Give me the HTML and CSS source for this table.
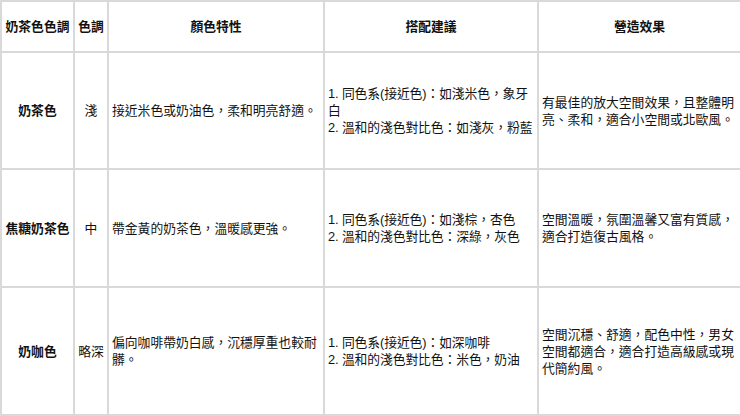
FILE: index.html
```html
<!DOCTYPE html>
<html lang="zh-Hant">
<head>
<meta charset="utf-8">
<link rel="stylesheet" href="styles.css">
</head>
<body>
<table class="tone-table">
  <colgroup>
    <col class="c1"><col class="c2"><col class="c3"><col class="c4"><col class="c5">
  </colgroup>
  <thead>
    <tr class="head-row">
      <th class="narrow">奶茶色色調</th>
      <th class="narrow">色調</th>
      <th>顏色特性</th>
      <th>搭配建議</th>
      <th>營造效果</th>
    </tr>
  </thead>
  <tbody>
    <tr class="row-a">
      <td class="name">奶茶色</td>
      <td class="tone">淺</td>
      <td>接近米色或奶油色，柔和明亮舒適。</td>
      <td class="pair">1. 同色系(接近色)：如淺米色，象牙白<br>2. 溫和的淺色對比色：如淺灰，粉藍</td>
      <td>有最佳的放大空間效果，且整體明亮、柔和，適合小空間或北歐風。</td>
    </tr>
    <tr class="row-b">
      <td class="name">焦糖奶茶色</td>
      <td class="tone">中</td>
      <td>帶金黃的奶茶色，溫暖感更強。</td>
      <td class="pair">1. 同色系(接近色)：如淺棕，杏色<br>2. 溫和的淺色對比色：深綠，灰色</td>
      <td>空間溫暖，氛圍溫馨又富有質感，適合打造復古風格。</td>
    </tr>
    <tr class="row-c">
      <td class="name">奶咖色</td>
      <td class="tone">略深</td>
      <td>偏向咖啡帶奶白感，沉穩厚重也較耐髒。</td>
      <td class="pair">1. 同色系(接近色)：如深咖啡<br>2. 溫和的淺色對比色：米色，奶油</td>
      <td>空間沉穩、舒適，配色中性，男女空間都適合，適合打造高級感或現代簡約風。</td>
    </tr>
  </tbody>
</table>
</body>
</html>
```

FILE: styles.css
```css
html, body {
  margin: 0;
  padding: 0;
  background: #ffffff;
}

body {
  font-family: "Liberation Sans", "Noto Sans CJK TC", sans-serif;
  font-size: 12.8px;
  line-height: 17px;
  color: #111111;
}

.tone-table {
  width: 740px;
  table-layout: fixed;
  border-collapse: collapse;
}

.c1 { width: 73px; }
.c2 { width: 34px; }
.c3 { width: 216px; }
.c4 { width: 214px; }
.c5 { width: 203px; }

.tone-table th,
.tone-table td {
  border: 2px solid #d9d9d9;
  padding: 0 3px;
  vertical-align: middle;
  word-break: break-all;
}

.tone-table th {
  font-weight: bold;
  text-align: center;
}

.tone-table th.narrow {
  padding: 0 1px;
  white-space: nowrap;
}

.head-row { height: 51px; }
.row-a { height: 117px; }
.row-b { height: 118px; }
.row-c { height: 128px; }

.tone-table td.name {
  font-weight: bold;
  text-align: center;
  padding: 0 1px;
  white-space: nowrap;
}

.tone-table td.tone {
  text-align: center;
  padding: 0 1px;
  white-space: nowrap;
}

.tone-table td.pair {
  padding: 0 0 0 3px;
  letter-spacing: -0.1px;
}
```
